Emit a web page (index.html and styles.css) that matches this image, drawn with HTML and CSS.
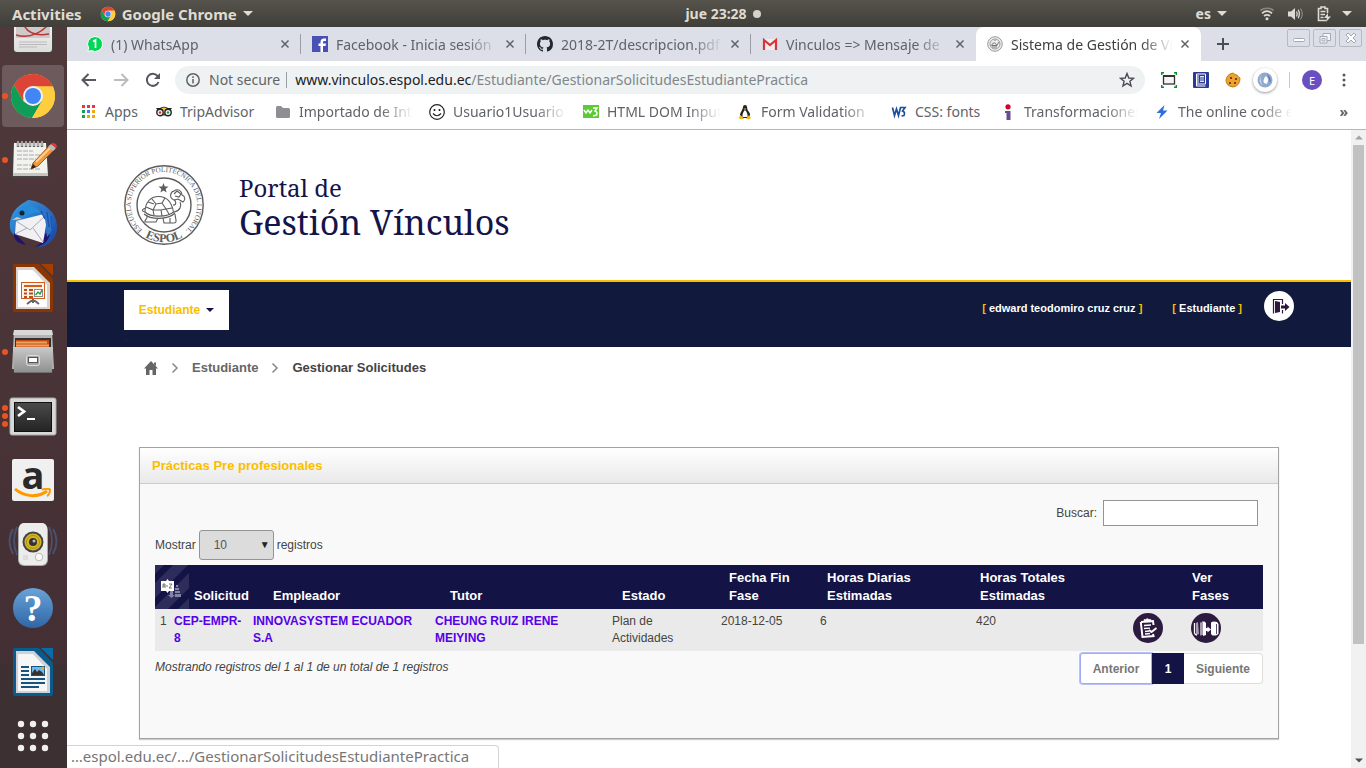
FILE: index.html
```html
<!DOCTYPE html>
<html lang="es">
<head>
<meta charset="utf-8">
<title>Sistema de Gestión de Vínculos</title>
<link rel="stylesheet" href="styles.css">
</head>
<body>
<svg width="0" height="0" class="defs" aria-hidden="true">
  <defs>
    <symbol id="chrome" viewBox="0 0 48 48">
      <circle cx="24" cy="24" r="22" fill="#ffcd40"/>
      <path d="M24 2A22 22 0 0 1 43.800 14.400H24L14 28 4.950 13A22 22 0 0 1 24 2Z" fill="#db4437"/>
      <path d="M4.950 13 15 30 24 33.500 33 29 23 46A22 22 0 0 1 4.950 13Z" fill="#0f9d58"/>
      <path d="M24 14.400H43.800A22 22 0 0 1 23 46L33 29Z" fill="#ffcd40"/>
      <circle cx="24" cy="24" r="10" fill="#f1f1f1"/>
      <circle cx="24" cy="24" r="8" fill="#4285f4"/>
    </symbol>
    <symbol id="close" viewBox="0 0 10 10"><path d="M1.500 1.500 8.500 8.500M8.500 1.500 1.500 8.500" stroke="#5f6368" stroke-width="1.500" fill="none"/></symbol>
    <symbol id="chev" viewBox="0 0 8 12"><path d="M1.500 1.500 6 6 1.500 10.500" stroke="#888" stroke-width="1.500" fill="none"/></symbol>
    <symbol id="caret" viewBox="0 0 10 5"><path d="M0 0H10L5 5Z" fill="currentColor"/></symbol>
    <linearGradient id="metal" x2="0" y2="1"><stop stop-color="#c9c9c9"/><stop offset="1" stop-color="#8e8e8e"/></linearGradient>
    <linearGradient id="paper" x2="0" y2="1"><stop stop-color="#fff"/><stop offset="1" stop-color="#dcdcdc"/></linearGradient>
    <linearGradient id="help" x2="0" y2="1"><stop stop-color="#6aa3d8"/><stop offset="1" stop-color="#2f66a6"/></linearGradient>
    <linearGradient id="screen" x2="0" y2="1"><stop stop-color="#4a4a4a"/><stop offset="1" stop-color="#242424"/></linearGradient>
    <linearGradient id="bird" x2="1" y2="1"><stop stop-color="#3aa0e6"/><stop offset="1" stop-color="#1a3fa0"/></linearGradient>
  </defs>
</svg>

<header class="topbar">
  <div class="top-left">
    <button class="top-item">Activities</button>
    <button class="top-item"><svg width="16" height="16"><use href="#chrome"/></svg>Google Chrome<svg width="10" height="5"><use href="#caret"/></svg></button>
  </div>
  <button class="top-item clock">jue 23:28<span class="dot"></span></button>
  <div class="top-right">
    <button class="top-item">es<svg width="10" height="5"><use href="#caret"/></svg></button>
    <svg width="16" height="14" viewBox="0 0 16 14" fill="none" stroke="#dfdbd2" stroke-width="1.700"><path d="M1.500 3.500C5 .5 11 .5 14.500 3.500" opacity=".4"/><path d="M3 6.300C6 3.800 10 3.800 13 6.300M5 9C7 7.600 9 7.600 11 9"/><circle cx="8" cy="11.800" r="1.500" fill="#dfdbd2" stroke="none"/></svg>
    <svg width="16" height="14" viewBox="0 0 16 14"><path d="M0 4.500H3L7 1V13L3 9.500H0Z" fill="#dfdbd2"/><path d="M8.500 4.500Q10 7 8.500 9.500M10.200 2.800Q12.500 7 10.200 11.200" stroke="#dfdbd2" stroke-width="1.300" fill="none"/><path d="M12.500 1.500Q16 7 12.500 12.500" stroke="#9b978e" fill="none"/></svg>
    <svg width="14" height="16" viewBox="0 0 14 16"><path d="M9 14.500H1.500V2.500H4V1H8V2.500H10.500V7" fill="none" stroke="#dfdbd2" stroke-width="1.600"/><path d="M3.500 5.500H8.500M3.500 8.500H8M3.500 11.500H6.500" stroke="#dfdbd2" stroke-width="1.500"/><path d="M11 7 7 12H9.800L9 16 14 10.500H11Z" fill="#dfdbd2"/></svg>
    <svg class="dim" width="10" height="5"><use href="#caret"/></svg>
  </div>
</header>

<div class="desktop">
<nav class="launcher" aria-label="Launcher">
  <button class="tile" aria-label="Document viewer"><svg width="48" height="48" viewBox="0 0 48 48"><rect x="4" y="2" width="40" height="43" rx="4" fill="#444"/><rect x="5" y="1" width="38" height="43" rx="3" fill="url(#paper)"/><rect x="7" y="15" width="34" height="15" fill="#cfcaca"/><path d="M7 27C18 30 30 27 40 16M14 15C18 26 28 28 40 26" stroke="#b8363a" stroke-width="1.500" fill="none"/><path d="M10 34H38M10 36.500H38M10 39H28" stroke="#bbb"/></svg></button>
  <button class="tile active" aria-label="Google Chrome"><span class="pips"><i></i></span><svg width="48" height="48"><use href="#chrome"/></svg></button>
  <button class="tile" aria-label="Text editor"><span class="pips"><i></i></span><svg width="48" height="48" viewBox="0 0 48 48"><path d="M4 8H38L40 42H3Z" fill="#444"/><path d="M5 7H37L39 40H4Z" fill="#f2f2ee"/><path d="M4 37H39V40H4Z" fill="#c6c6c0"/><path d="M9 6v5M13 6v5M17 6v5M21 6v5M25 6v5M29 6v5M33 6v5" stroke="#666" stroke-width="2.400"/><path d="M9 5v5M13 5v5M17 5v5M21 5v5M25 5v5M29 5v5M33 5v5" stroke="#eee"/><path d="M8 15H24M8 19H33M8 23H27M8 29H22M8 33H32" stroke="#aaa" stroke-dasharray="5 1"/><path d="M24 27 41 9 46 13 29 30 22 33Z" fill="#f0963c" stroke="#a85b18"/><path d="M27 26 42 11" stroke="#ffd08c" stroke-width="2"/><path d="M39 11 42 8 47 12 44 15Z" fill="#bbb"/><path d="M42 8C44 5 50 9 47 12Z" fill="#e03a3a"/><path d="M22 33 24 28 27 31Z" fill="#222"/></svg></button>
  <button class="tile" aria-label="Thunderbird"><svg width="50" height="50" viewBox="0 0 50 50"><path d="M3 19C6 8 16 4 20 1C34 2 49 12 49 28C49 40 40 48 30 48C38 44 36 36 34 33L7 37C1 33 1 25 3 19Z" fill="url(#bird)"/><path d="M6 34C5 42 12 45 18 46L8 35ZM37 35C36 42 32 46 26 48C38 47 42 39 42 33Z" fill="#23136b"/><path d="M8 22 36 15 39 20 35 44 7 35Z" fill="#f1f1f4"/><path d="M8 22 22 31 37 17M7 35 19 29M35 43 25 29" stroke="#aab" fill="none"/><path d="M5 21C10 4 24 3 33 14 26 12 20 17 14 18Z" fill="#268bd8"/><path d="M22 3C38 9 38 23 39 38C47 31 47 18 38 11Z" fill="#2c73c9"/><path d="M33 12 37 20M39 13 41 28M43 17 44 30" stroke="#1b56ad" stroke-width="1.500"/><circle cx="14" cy="14" r="2.500" fill="#123"/><path d="M4 21 9 18 14 20Z" fill="#ccc"/></svg></button>
  <button class="tile" aria-label="LibreOffice Impress"><svg width="48" height="48" viewBox="0 0 48 48"><path d="M6 0H30L44 15V46Q44 48 42 48H6Q4 48 4 46V2Q4 0 6 0Z" fill="#8b3503"/><path d="M7 3H25L41 19V45H7Z" fill="#d7d2cf"/><path d="M9 6H24L38 21V43H9Z" fill="#fff"/><path d="M32 0H44V12Z" fill="#a33e03"/><rect x="12.500" y="18.500" width="23" height="16" fill="#fdf1e8" stroke="#d15e1e"/><path d="M15 22H33" stroke="#d15e1e" stroke-width="2"/><path d="M15 26H18M15 29.500H18M15 33H18M20 26H24M20 29.500H24M20 33H24" stroke="#b74f1b" stroke-width="2"/><rect x="25.500" y="25.500" width="8" height="7" fill="#fff" stroke="#888"/><path d="M26.500 31 29 28 31 30 33 26" stroke="#2f9e44" stroke-width="1.500" fill="none"/><path d="M18 40 22 37H26L30 40M24 35V39" stroke="#666" stroke-width="2" fill="none"/></svg></button>
  <button class="tile" aria-label="Files"><span class="pips"><i></i></span><svg width="48" height="48" viewBox="0 0 48 48"><path d="M5 2H43L45 41H3Z" fill="#b4b4b4"/><path d="M5 2H43L44 7H4Z" fill="#d8d8d8"/><rect x="6" y="10" width="36" height="12" fill="#333"/><rect x="7" y="12" width="33" height="8" fill="#c24a1e"/><path d="M7 14.500H38M7 17.500H40" stroke="#f0a255" stroke-width="1.800"/><path d="M4 19H44L43 45H5Z" fill="url(#metal)"/><path d="M5 44.500H43" stroke="#6f6f6f"/><rect x="17.500" y="27.500" width="13" height="10" rx="2" fill="#a5a5a5" stroke="#dedede"/><rect x="19.500" y="29.500" width="9" height="5" fill="#fff" stroke="#555"/></svg></button>
  <button class="tile" aria-label="Terminal"><span class="pips"><i></i><i></i><i></i></span><svg width="48" height="40" viewBox="0 0 48 40"><rect x="1" y="2" width="46" height="37" rx="2" fill="#d8d8d8" stroke="#aaa"/><rect x="5" y="6" width="38" height="30" fill="#111"/><rect x="6" y="7" width="36" height="28" fill="url(#screen)"/><path d="M9 11 15 15.500 9 20" stroke="#fff" stroke-width="2.800" fill="none"/><path d="M18 23H26" stroke="#fff" stroke-width="2"/></svg></button>
  <button class="tile amazon" aria-label="Amazon"><span class="amz">a</span><svg width="38" height="12" viewBox="0 0 38 12"><path d="M1 1C10 9 24 10 33 3" stroke="#ff9900" stroke-width="3" fill="none"/><path d="M28 2C31 0 35 1 36 1.500 36 4 35 7 33 8" stroke="#ff9900" stroke-width="2" fill="none"/></svg></button>
  <button class="tile" aria-label="Rhythmbox"><svg width="50" height="48" viewBox="0 0 50 48"><g fill="none" stroke="#52658e" stroke-width="1.800" opacity=".6"><path d="M9 7Q3 20 9 35M5 9Q-2 21 5 34M41 7Q47 20 41 35M45 9Q52 21 45 34"/></g><rect x="10" y="4" width="30" height="42" rx="6" fill="#aaa"/><rect x="11" y="3" width="28" height="42" rx="5" fill="#ececea"/><circle cx="25" cy="22" r="10.500" fill="#424448"/><circle cx="25" cy="22" r="8.500" fill="#d6b51e"/><circle cx="25" cy="22" r="6.500" fill="none" stroke="#a8901c"/><circle cx="25" cy="22" r="4" fill="#333"/><circle cx="26" cy="21" r="1.500" fill="#bbb"/><circle cx="31" cy="37" r="3.800" fill="#f8f8f8" stroke="#bbb"/><path d="M15 35H20V40H15Z" fill="#ddd"/></svg></button>
  <button class="tile" aria-label="Help"><svg width="44" height="44" viewBox="0 0 44 44"><circle cx="22" cy="22" r="20" fill="url(#help)"/><text x="22" y="35" text-anchor="middle" class="qmark">?</text></svg></button>
  <button class="tile" aria-label="LibreOffice Writer"><svg width="48" height="48" viewBox="0 0 48 48"><path d="M6 0H30L44 15V46Q44 48 42 48H6Q4 48 4 46V2Q4 0 6 0Z" fill="#0b5a8c"/><path d="M7 3H25L41 19V45H7Z" fill="#ccd3d8"/><path d="M9 6H24L38 21V43H9Z" fill="#f6f6f6"/><path d="M32 0H44V12Z" fill="#0a6ba6"/><path d="M12 19H20M12 23H20M12 27H20M12 31H36M12 35H36M12 39H30" stroke="#17557f" stroke-width="2"/><rect x="22.500" y="18.500" width="13" height="9" fill="#72b9e8" stroke="#17557f"/><path d="M23 27V25L26 21 28 24 30 22 33 24 35 27Z" fill="#333"/><circle cx="34" cy="20" r="1.500" fill="#e9a93c"/></svg></button>
  <button class="tile" aria-label="Show applications"><svg width="32" height="32" viewBox="0 0 32 32" fill="#f2f0ee"><circle cx="4" cy="4" r="3.200"/><circle cx="16" cy="4" r="3.200"/><circle cx="28" cy="4" r="3.200"/><circle cx="4" cy="16" r="3.200"/><circle cx="16" cy="16" r="3.200"/><circle cx="28" cy="16" r="3.200"/><circle cx="4" cy="28" r="3.200"/><circle cx="16" cy="28" r="3.200"/><circle cx="28" cy="28" r="3.200"/></svg></button>
</nav>

<div class="browser">
  <div class="tabstrip">
    <div class="tab"><svg width="16" height="16" viewBox="0 0 16 16"><path d="M8 .5A7.500 7.500 0 1 1 4.500 14.600L.8 15.400 1.700 12A7.500 7.500 0 0 1 8 .5Z" fill="#00d757" stroke="#fff"/><path d="M6 5.500 8.500 4V12" stroke="#fff" stroke-width="1.700" fill="none"/></svg><span class="fade">(1) WhatsApp</span><button class="x" aria-label="Close tab"><svg width="10" height="10"><use href="#close"/></svg></button></div>
    <div class="tab"><svg width="16" height="16" viewBox="0 0 16 16"><path d="M0 0H16V16H0Z" fill="#4951b5"/><path d="M11 16V10H13.500L14 7.500H11V6Q11 5 12.500 5H14V2.500H12Q8.500 2.500 8.500 6V7.500H6.500V10H8.500V16Z" fill="#fff"/></svg><span class="fade">Facebook - Inicia sesión</span><button class="x" aria-label="Close tab"><svg width="10" height="10"><use href="#close"/></svg></button></div>
    <div class="tab"><svg width="16" height="16" viewBox="0 0 16 16"><path fill="#24292e" d="M8 0C3.580 0 0 3.580 0 8c0 3.540 2.290 6.530 5.470 7.590.4.070.55-.17.55-.38 0-.19-.01-.82-.01-1.490-2.010.37-2.530-.49-2.690-.94-.09-.23-.48-.94-.82-1.130-.28-.15-.68-.52-.01-.53.63-.01 1.080.58 1.230.82.72 1.210 1.870.87 2.330.66.070-.52.280-.87.510-1.070-1.780-.2-3.640-.89-3.640-3.950 0-.87.310-1.590.820-2.150-.08-.2-.36-1.020.080-2.120 0 0 .67-.21 2.200.82.640-.18 1.320-.27 2-.27s1.360.09 2 .27c1.530-1.040 2.200-.82 2.200-.82.440 1.100.16 1.920.080 2.120.510.56.820 1.270.820 2.150 0 3.070-1.870 3.750-3.650 3.950.29.25.54.73.54 1.480 0 1.070-.01 1.930-.01 2.200 0 .21.150.46.550.38A8.010 8.010 0 0 0 16 8c0-4.420-3.580-8-8-8Z"/></svg><span class="fade">2018-2T/descripcion.pdf</span><button class="x" aria-label="Close tab"><svg width="10" height="10"><use href="#close"/></svg></button></div>
    <div class="tab"><svg width="16" height="16" viewBox="0 0 16 16"><path d="M1 3H15V14H1Z" fill="#eee"/><path d="M2 14V4L8 9 14 4V14" fill="none" stroke="#d9343a" stroke-width="2.200"/></svg><span class="fade">Vinculos =&gt; Mensaje de</span><button class="x" aria-label="Close tab"><svg width="10" height="10"><use href="#close"/></svg></button></div>
    <div class="tab current"><svg width="16" height="16" viewBox="0 0 16 16" fill="none" stroke="#999"><circle cx="8" cy="8" r="7.300" fill="#eee"/><circle cx="8" cy="8" r="5"/><path d="M4.500 9.500Q7 4 10 9.500ZM10 9 12 6M5 11H10M8 4V5" stroke="#777"/></svg><span class="fade">Sistema de Gestión de Vínculos</span><button class="x" aria-label="Close tab"><svg width="10" height="10"><use href="#close"/></svg></button></div>
    <button class="newtab" aria-label="New tab"><svg width="12" height="12" viewBox="0 0 12 12"><path d="M6 0V12M0 6H12" stroke="#4a4d52" stroke-width="2"/></svg></button>
    <div class="winbtns">
      <button aria-label="Minimize"><svg width="12" height="12" viewBox="0 0 12 12"><rect x=".5" y="6.500" width="11" height="3" rx="1" fill="#fff" stroke="#a4a8b0"/></svg></button>
      <button aria-label="Restore"><svg width="12" height="12" viewBox="0 0 12 12" fill="#f5f6f9" stroke="#a4a8b0"><path d="M4 1.500H11.500V8.500H4Z"/><path d="M1 4.500H8V11H1Z"/><path d="M3 6.500H6V9H3Z"/></svg></button>
      <button aria-label="Close"><svg width="12" height="12" viewBox="0 0 12 12"><path d="M1 3 3 1 6 4 9 1 11 3 8 6 11 9 9 11 6 8 3 11 1 9 4 6Z" fill="#fff" stroke="#a4a8b0"/></svg></button>
    </div>
  </div>

  <div class="toolbar">
    <button class="tool" aria-label="Back"><svg width="16" height="14" viewBox="0 0 16 14"><path d="M7.500 1 1.500 7 7.500 13M2 7H15" stroke="#55585d" stroke-width="2" fill="none"/></svg></button>
    <button class="tool" aria-label="Forward"><svg width="16" height="14" viewBox="0 0 16 14"><path d="M8.500 1 14.500 7 8.500 13M14 7H1" stroke="#babcbe" stroke-width="2" fill="none"/></svg></button>
    <button class="tool" aria-label="Reload"><svg width="16" height="16" viewBox="0 0 16 16"><path d="M13.500 10A6 6 0 1 1 12.500 4L14 6" stroke="#55585d" stroke-width="2" fill="none"/><path d="M15 1V7H9Z" fill="#55585d"/></svg></button>
    <div class="omnibox">
      <svg width="16" height="16" viewBox="0 0 16 16" fill="none" stroke="#5f6368" stroke-width="1.500"><circle cx="8" cy="8" r="6.200"/><path d="M8 7V11.500M8 4.300V6"/></svg>
      <span class="notsecure">Not secure</span>
      <span class="url"><b>www.vinculos.espol.edu.ec</b>/Estudiante/GestionarSolicitudesEstudiantePractica</span>
      <svg width="16" height="16" viewBox="0 0 16 16"><path d="m8 1.500 1.800 4.500 4.700.3-3.600 3 1.200 4.700L8 11.400 3.900 14l1.200-4.700-3.600-3 4.700-.3Z" fill="none" stroke="#4a4d52" stroke-width="1.400"/></svg>
    </div>
    <div class="exts">
      <svg width="16" height="16" viewBox="0 0 16 16" fill="none"><rect x="2.500" y="4" width="11" height="8" fill="#f4f4f4" stroke="#333" stroke-width="1.300"/><path d="M2 4H14" stroke="#333" stroke-width="2"/><path d="M.7 3V.7H3M13 .7H15.300V3M15.300 13V15.300H13M3 15.300H.7V13" stroke="#0a8f2c" stroke-width="1.400"/></svg>
      <svg width="16" height="16" viewBox="0 0 16 16"><rect width="16" height="16" rx="1" fill="#2b3a92"/><path d="M3.500 2H12.500V12H3.500ZM3.500 12V14H12.500" stroke="#fff" fill="none"/><path d="M5 3V11" stroke="#fff"/><path d="M7 4H11V10H7Z" fill="#dfe3f5"/><path d="M8 5V9M10 5V9" stroke="#2b3a92"/></svg>
      <svg width="16" height="16" viewBox="0 0 16 16"><path d="M8 1Q10 3 12 3 13 5 15 6 15 14 8 15 1 14 1 8 2 2 8 1Z" fill="#eba32d" stroke="#c47a1e"/><path d="M5 5h2v2h-2zM10 6h2v2h-2zM4 10h2v2h-2zM9 10h2v2h-2z" fill="#7c4012"/></svg>
      <span class="round"><svg width="16" height="16" viewBox="0 0 16 16"><circle cx="8" cy="8" r="7.500" fill="#8fa9cf"/><path d="M5 2Q0 9 6 14 2 7 5 2Z" fill="#d2def0"/><path d="M9 4Q13 7 9.500 12 5 11 7 7 7.500 5 9 4Z" fill="#fff"/><path d="M10 2Q15 6 13 11 12 6 10 2Z" fill="#5878ad"/></svg></span>
      <span class="vline"></span>
      <button class="avatar">E</button>
      <svg class="kebab" width="4" height="14" viewBox="0 0 4 14" fill="#55585d"><circle cx="2" cy="2" r="1.500"/><circle cx="2" cy="7" r="1.500"/><circle cx="2" cy="12" r="1.500"/></svg>
    </div>
  </div>

  <nav class="bookmarks" aria-label="Bookmarks">
    <a href="#" class="b-apps"><svg width="16" height="16" viewBox="0 0 16 16"><path d="M1 1h3v3H1zM6 1h3v3H6zM11 1h3v3h-3z" fill="#e8344a"/><path d="M1 6h3v3H1zM1 11h3v3H1z" fill="#1c9e4b"/><path d="M6 6h3v3H6z" fill="#3c7df0"/><path d="M11 6h3v3h-3zM6 11h3v3H6zM11 11h3v3h-3z" fill="#f2a60c"/></svg><span>Apps</span></a>
    <a href="#" class="b-trip"><svg width="16" height="16" viewBox="0 0 16 16"><path d="M0 4H4Q8 1.500 12 4H16L14.500 6H1.500Z" fill="#222"/><path d="M5 4Q8 3 11 4L8 7Z" fill="#f5c33b"/><circle cx="4" cy="8.500" r="3.200" fill="#fff" stroke="#222" stroke-width="1.400"/><circle cx="12" cy="8.500" r="3.200" fill="#fff" stroke="#222" stroke-width="1.400"/><circle cx="4" cy="8.500" r="1.300" fill="#d03030"/><circle cx="12" cy="8.500" r="1.300" fill="#2a9a3c"/><path d="M7 10H9L8 12.500Z" fill="#222"/></svg><span>TripAdvisor</span></a>
    <a href="#"><svg width="16" height="16" viewBox="0 0 16 16"><path d="M1 3.500Q1 2 2.500 2H6L8 4H13.500Q15 4 15 5.500V12.500Q15 14 13.500 14H2.500Q1 14 1 12.500Z" fill="#8e8e93"/></svg><span class="fade">Importado de Internet</span></a>
    <a href="#"><svg width="16" height="16" viewBox="0 0 16 16" fill="none" stroke="#222" stroke-width="1.200"><circle cx="8" cy="8" r="7.300"/><path d="M4 9.500Q8 14 12 9.500"/><path d="M5.500 5V7M10.500 5V7" stroke-width="1.600"/></svg><span class="fade">Usuario1Usuario1</span></a>
    <a href="#"><svg width="16" height="16" viewBox="0 0 16 16"><path d="M0 1H16V14H0Z" fill="#5ccb33"/><path d="M1 6 3 9 5 6 7 9 9 6M10 4H14L12 7Q15 8 13.500 11L10 12" stroke="#fff" stroke-width="1.500" fill="none"/></svg><span class="fade">HTML DOM Input</span></a>
    <a href="#"><svg width="16" height="16" viewBox="0 0 16 16"><path d="M6 3Q6 1 8 1T10 3Q10 6 12 8T12 14H4Q2 11 4 8T6 3Z" fill="#222"/><path d="M8 6Q11 9 10.500 13H5.500Q5 9 8 6Z" fill="#fff"/><path d="M1.500 14 3.500 11 7 14.500 4 15.500ZM14 14 12 11 9 14.500 12 15.500ZM6.500 4.500H9.500L8 6Z" fill="#f2b713"/></svg><span class="fade">Form Validation</span></a>
    <a href="#" class="b-css"><svg width="16" height="16" viewBox="0 0 16 16" fill="none" stroke="#1e4f9e" stroke-width="1.700"><path d="M1.500 3.500 3.500 11.500 5.500 5 7.500 11.500 9.500 3.500H14L11.500 7Q14.500 8 13 11.500L10.500 12"/></svg><span>CSS: fonts</span></a>
    <a href="#"><svg width="16" height="16" viewBox="0 0 16 16"><circle cx="8" cy="2.800" r="2.600" fill="#d5002b"/><path d="M5 7H10.500V16H6.500V9H5Z" fill="#6b4a94"/></svg><span class="fade">Transformaciones</span></a>
    <a href="#"><svg width="16" height="16" viewBox="0 0 16 16"><path d="M10.500 1 2.500 9H7L5 15 13.500 6.500H9Z" fill="#2a6fdc"/></svg><span class="fade">The online code editor</span></a>
    <button class="more" aria-label="More bookmarks">»</button>
  </nav>

  <div class="viewport">
    <main class="page">
      <header class="brand">
        <svg width="80" height="80" viewBox="0 0 80 80" role="img" aria-label="ESPOL">
          <defs>
            <path id="ringpath" d="M18 65A33.200 33.200 0 1 1 62 65"/>
            <path id="namepath" d="M12 64.500A37.200 37.200 0 0 0 68 64.500"/>
          </defs>
          <circle cx="40" cy="40" r="39.200" fill="none" stroke="#5c5c5c" stroke-width="1.400"/>
          <circle cx="40" cy="40" r="27" fill="none" stroke="#5c5c5c" stroke-width="1.400"/>
          <path d="m39.500 18 1.300 3.400 3.700.2-2.900 2.300 1 3.500-3.100-2-3.100 2 1-3.500-2.900-2.300 3.700-.2Z" fill="#5c5c5c"/>
          <g fill="none" stroke="#5c5c5c" stroke-width="1.100">
            <path d="M21 47C21 37 27 31.500 34.500 31.500S47.500 36 49.500 47C44 52 27 53 21 47Z"/>
            <path d="M21 47C17 46 18 44 22 43M28 34l4 5 6-1 3-5M32 39l-3 6M38 38l4 6M22 42l7 3 1 5M29 45h8l5-1M37 45l1 6M42 44l6-1M24 37l6 2M42 44l3 5"/>
            <path d="M20 49C27 55 44 55 51 48M50 47C56 46 58 41 56 37M49 40C53 40 52 36 50 35C45 33 46 27 50 26C54 23 58 26 58 30C61 31 62 35 59 37L54 34 50 35"/>
            <path d="M23 51C24 55 20 54 21 57H32L34 53M39 53 40 58H50C54 58 51 53 51 49M50 29l3-3 4 3-2 3-4-1M46 53v5"/>
          </g>
          <text class="seal-text" text-anchor="middle"><textPath href="#ringpath" startOffset="50%">ESCUELA SUPERIOR POLITÉCNICA DEL LITORAL</textPath></text>
          <text class="seal-name" text-anchor="middle"><textPath href="#namepath" startOffset="50%">ESPOL</textPath></text>
        </svg>
        <h1><span>Portal de</span>Gestión Vínculos</h1>
      </header>
      <div class="navbar">
        <div class="menu"><button class="menu-btn">Estudiante<svg width="8" height="4" viewBox="0 0 10 5"><use href="#caret"/></svg></button><span class="semi">;</span></div>
        <div class="session">
          <span><em>[</em> edward teodomiro cruz cruz <em>]</em></span>
          <span><em>[</em> Estudiante <em>]</em></span>
          <button class="logout" aria-label="Salir"><svg width="30" height="30" viewBox="0 0 30 30"><path d="M9.500 22.500V8.500H18.500V13M18.500 19V22.500" stroke="#2b1a3c" stroke-width="1.200" fill="none"/><path d="M11 10 16 11V21L11 22Z" fill="#2b1a3c"/><path d="M17 14.500H21V12L25.500 16 21 20V17.500H17Z" fill="#2b1a3c"/></svg></button>
        </div>
      </div>
      <nav class="crumbs" aria-label="Ruta">
        <a href="#" aria-label="Inicio"><svg width="14" height="14" viewBox="0 0 14 14"><path d="M7 0 14 7.500H12V14H8.500V9H5.500V14H2V7.500H0ZM10 1.500H12V5L10 3Z" fill="#666"/></svg></a>
        <svg width="8" height="12"><use href="#chev"/></svg>
        <a href="#">Estudiante</a>
        <svg width="8" height="12"><use href="#chev"/></svg>
        <span class="here">Gestionar Solicitudes</span>
      </nav>
      <section class="panel">
        <h2>Prácticas Pre profesionales</h2>
        <div class="panel-body">
          <div class="search"><label for="q">Buscar:</label><input id="q" type="text"></div>
          <div class="length"><label for="len">Mostrar</label><span class="selwrap"><select id="len"><option>10</option></select></span><span>registros</span></div>
          <table>
            <colgroup><col class="c1"><col class="c2"><col class="c3"><col class="c4"><col class="c5"><col class="c6"><col class="c7"><col class="c8"><col class="c9"><col class="c10"></colgroup>
            <thead><tr>
              <th class="sort"><svg width="34" height="44" viewBox="0 0 34 44"><path d="M0 0H9L0 9ZM18 0H33L0 33V18ZM34 8V23L13 44H0V42ZM34 33V44H23Z" fill="#fff" opacity=".11"/><path d="M6 16H11L12.500 14 14 16H19V26H14L12.500 28 11 26H6Z" fill="#fff"/><path d="M8 23V19H10V23M8 21H10M11 21H13M14 19H17L14 23H17" stroke="#555" fill="none" stroke-width=".8"/><path d="M15 26H18V30H20L16.500 33 13 30H15ZM21 20H23V22H21ZM20 23H24V25H20ZM20 26H25V28H20ZM20 29H26V32H20Z" fill="#8384a5"/></svg></th>
              <th class="p25">Solicitud</th><th class="p25">Empleador</th><th class="p20">Tutor</th><th class="p15">Estado</th><th class="p13">Fecha Fin<br>Fase</th><th class="p12">Horas Diarias<br>Estimadas</th><th class="p9">Horas Totales<br>Estimadas</th><th></th><th class="p6">Ver<br>Fases</th>
            </tr></thead>
            <tbody><tr>
              <td>1</td><td><a href="#">CEP-EMPR-8</a></td><td><a href="#">INNOVASYSTEM ECUADOR S.A</a></td><td><a href="#">CHEUNG RUIZ IRENE MEIYING</a></td><td>Plan de Actividades</td><td>2018-12-05</td><td>6</td><td>420</td>
              <td><button class="act" aria-label="Plan de actividades"><svg width="30" height="30" viewBox="0 0 30 30"><circle cx="15" cy="15" r="15" fill="#2d1a40"/><g fill="none" stroke="#fff"><path d="M8 9 20 8 20.500 12M20 21 20.500 23 9.500 24 7.800 9" stroke-width="2"/><path d="M11 6.500H13Q14 4.500 15.500 6.300L18 6.500V9H11Z" fill="#fff" stroke-width=".5"/><path d="M11 12.500 18 12M11 15.500 17 15.200M12 18.500 16 18M12 21 17 20.500" stroke-width="1.300"/><path d="M16 17 18.500 19 23.500 15" stroke-width="2"/></g></svg></button></td>
              <td><button class="act" aria-label="Ver fases"><svg width="30" height="30" viewBox="0 0 30 30"><circle cx="15" cy="15" r="15" fill="#2d1a40"/><path d="M5 10 7 9 8 21 5 22Z" fill="#a79bb2"/><path d="M3.500 10V20Q4 22 6 22" stroke="#fff" stroke-width="1.300" fill="none"/><path d="M9 9.500 12 9V22L9 22.500Z" fill="#a79bb2"/><path d="M11 8.500H13.500L15 10V22L12 23V10Z" fill="#fff"/><path d="M15 16.500H17" stroke="#fff" stroke-width="3"/><path d="M16.500 13.500 20 16.500 16.500 19.500Z" fill="#fff"/><path d="M20 9.500Q22 8 26 9L27.500 11V21L25 22.500H21.500L20 21Z" fill="#fff"/><path d="M25.500 11V21" stroke="#2d1a40" stroke-width=".8"/></svg></button></td>
            </tr></tbody>
          </table>
          <div class="foot">
            <p>Mostrando registros del 1 al 1 de un total de 1 registros</p>
            <div class="pager"><button class="prev">Anterior</button><button class="num">1</button><button class="next">Siguiente</button></div>
          </div>
        </div>
      </section>
    </main>
    <div class="scrollbar" aria-hidden="true">
      <svg width="8" height="5" viewBox="0 0 10 5"><path d="M0 5H10L5 0Z" fill="#a3a3a3"/></svg>
      <div class="track"><div class="thumb"></div></div>
      <svg width="8" height="5" viewBox="0 0 10 5"><path d="M0 0H10L5 5Z" fill="#505050"/></svg>
    </div>
    <div class="status">…espol.edu.ec/…/GestionarSolicitudesEstudiantePractica</div>
  </div>
</div>
</div>
</body>
</html>
```
FILE: styles.css
```css
* { box-sizing: border-box; }
body { margin: 0; height: 100vh; display: flex; flex-direction: column; overflow: hidden; font-family: "Noto Sans", "Open Sans", sans-serif; font-size: 14px; }
button { border: 0; padding: 0; background: none; font: inherit; color: inherit; }
a { text-decoration: none; color: inherit; }
svg { flex: none; display: block; }
.defs { position: absolute; }

.topbar { flex: none; height: 27px; display: grid; grid-template-columns: 1fr auto 1fr; align-items: center; background: linear-gradient(#55534b, #3f3e39); color: #dfdbd2; font-weight: bold; }
.top-left { display: flex; gap: 18px; padding-left: 12px; font-size: 15px; line-height: 20px; }
.top-item { display: flex; align-items: center; gap: 6px; }
.clock { margin-left: 80px; line-height: 20px; }
.dot { width: 8px; height: 8px; border-radius: 50%; background: #d5d2ca; }
.top-right { display: flex; justify-content: flex-end; align-items: center; gap: 13px; padding-right: 14px; }
.top-right .top-item { margin-right: 19px; }
.dim { margin-left: -2px; }

.desktop { flex: 1; min-height: 0; display: flex; }
.launcher { flex: none; width: 67px; overflow: hidden; padding-left: 2px; background: linear-gradient(#50393b, #432f34 85%, #3d3032 87%); display: flex; flex-direction: column; gap: 2px; }
.tile { flex: none; position: relative; width: 62px; height: 62px; border-radius: 4px; display: flex; align-items: center; justify-content: center; }
.tile:first-child { margin-top: -26px; }
.tile.active { background: #6d5a5c; }
.pips { position: absolute; left: 0; top: 0; bottom: 0; display: flex; flex-direction: column; justify-content: center; gap: 2px; }
.pips i { width: 6px; height: 6px; border-radius: 50%; background: #ea5421; }
.amazon { flex-direction: column; width: 42px; height: 42px; margin: 10px; border-radius: 2px; background: #f0f0f0; }
.amz { font-family: "Open Sans", sans-serif; font-weight: bold; font-size: 38px; line-height: 28px; color: #2a2a2a; }
.qmark { font-family: "Liberation Serif", serif; font-weight: bold; font-size: 38px; fill: #fff; }

.browser { flex: 1; min-width: 0; display: flex; flex-direction: column; background: #fff; }
.tabstrip { flex: none; height: 34px; display: flex; align-items: center; background: #dcdfe7; padding: 0 4px 0 9px; color: #5f6368; }
.tab { flex: 0 1 225px; min-width: 0; height: 34px; display: flex; align-items: center; padding: 0 11px; position: relative; }
.tab svg + .fade { margin-left: 8px; }
.fade { flex: 1; min-width: 0; overflow: hidden; white-space: nowrap; -webkit-mask-image: linear-gradient(to right, #000 calc(100% - 32px), transparent); mask-image: linear-gradient(to right, #000 calc(100% - 32px), transparent); }
.tab .x { margin-left: 7px; }
.tab:not(.current):not(:nth-child(4))::after { content: ""; position: absolute; right: 0; top: 7px; width: 1px; height: 20px; background: #9a9da3; }
.current { background: #fff; color: #3c4043; border-radius: 8px 8px 0 0; }
.newtab { margin-left: 16px; }
.winbtns { display: flex; gap: 3px; margin-left: auto; align-self: flex-start; padding-top: 2px; }
.winbtns button { width: 23px; height: 18px; border: 1px solid #b5b9c2; border-radius: 2px; display: flex; align-items: center; justify-content: center; }

.toolbar { flex: none; height: 38px; display: flex; align-items: center; padding: 0 20px 0 14px; gap: 16px; }
.omnibox { flex: 1; height: 28px; border-radius: 14px; background: #eef2f3; display: flex; align-items: center; padding: 0 10px; margin-left: -2px; color: #5f6368; }
.notsecure { padding: 0 6px 0 8px; border-right: 1px solid #9a9da3; line-height: 16px; }
.url { flex: 1; padding-left: 8px; color: #80868b; line-height: 16px; }
.url b { font-weight: normal; color: #202124; }
.exts { display: flex; align-items: center; gap: 16px; }
.round { width: 24px; height: 24px; border-radius: 50%; margin: 0 -4px; box-shadow: 0 1px 3px #999; display: flex; align-items: center; justify-content: center; }
.vline { width: 1px; height: 16px; background: #c8cacc; margin-right: -4px; }
.kebab { margin-left: 4px; }
.avatar { width: 20px; height: 20px; border-radius: 50%; background: #6a4fc0; color: #fff; font-size: 11px; }

.bookmarks { flex: none; height: 31px; border-bottom: 1px solid #b6b6b6; display: flex; align-items: center; gap: 16px; padding: 0 18px 5px 14px; color: #5f6368; }
.bookmarks a { flex: 0 1 138px; min-width: 0; display: flex; align-items: center; gap: 8px; white-space: nowrap; line-height: 20px; }
.bookmarks .b-apps { flex: none; width: 59px; }
.bookmarks .b-trip { flex: none; width: 103px; }
.bookmarks .b-css { flex: none; width: 93px; }
.more { margin-left: auto; font-weight: bold; line-height: 20px; }

.viewport { flex: 1; min-height: 0; position: relative; display: flex; }
.page { flex: 1; min-width: 0; overflow: hidden; font-family: "Liberation Sans", Arial, sans-serif; font-size: 12px; color: #444; }
.brand { height: 150px; padding: 0 57px; display: flex; align-items: center; gap: 35px; }
.brand h1 { margin: 0; padding-top: 5px; font-family: "Noto Serif", "Liberation Serif", serif; font-weight: normal; font-size: 34px; line-height: 40px; color: #14134a; }
.brand h1 span { display: block; font-size: 24px; line-height: 28px; }
.seal-text { font-family: "Liberation Serif", serif; font-size: 7px; fill: #5c5c5c; }
.seal-name { font-family: "Liberation Serif", serif; font-weight: bold; font-size: 12px; fill: #5c5c5c; }
.navbar { height: 67px; border-top: 2px solid #f9be00; background: #111a3c; padding: 8px 57px 0; display: flex; justify-content: space-between; align-items: flex-start; }
.menu { display: flex; flex-direction: column; }
.menu-btn { width: 105px; height: 40px; background: #fff; color: #f9be00; font-weight: bold; display: flex; align-items: center; justify-content: center; gap: 6px; }
.menu-btn svg { color: #14134a; }
.semi { color: #291f45; line-height: 15px; }
.session { display: flex; align-items: center; color: #fff; font-weight: bold; font-size: 11px; gap: 30px; margin-top: 1px; }
.session span { padding-top: 3px; }
.session em { font-style: normal; color: #f9be00; }
.logout { width: 30px; height: 30px; border-radius: 50%; background: #fff; margin-left: -8px; }
.crumbs { height: 41px; display: flex; align-items: center; gap: 13px; padding: 0 77px; font-weight: bold; font-size: 13px; color: #666; }
.here { color: #444; }
.panel { margin: 59px 72px 0; border: 1px solid #a3a3a3; background: #f9f9f9; box-shadow: 0 1px 1px #ccc; }
.panel h2 { margin: 0; height: 36px; padding: 0 12px; border-bottom: 1px solid #ccc; background: linear-gradient(#fff, #e9e9e9); color: #f9be00; font-size: 13px; line-height: 35px; }
.panel-body { padding: 16px 15px 54px; }
.search { display: flex; justify-content: flex-end; align-items: center; gap: 6px; padding-right: 5px; }
.search input { width: 155px; height: 26px; border: 1px solid #949494; background: #fff; }
.length { display: flex; align-items: center; gap: 3px; margin: 4px 0 5px; }
.selwrap { position: relative; display: flex; }
.selwrap::after { content: "▼"; position: absolute; right: 4px; top: 8px; font-size: 10px; line-height: 14px; color: #222; pointer-events: none; }
.length select { appearance: none; width: 75px; height: 30px; padding: 0 14px; border: 1px solid #949494; border-radius: 3px; background: #dcdcdc; font: inherit; color: #555; }
table { width: 100%; table-layout: fixed; border-collapse: collapse; }
.c1 { width: 14px; } .c2 { width: 79px; } .c3 { width: 182px; } .c4 { width: 177px; } .c5 { width: 109px; }
.c6 { width: 99px; } .c7 { width: 156px; } .c8 { width: 157px; } .c9 { width: 58px; } .c10 { width: 77px; }
thead { background: #141346; }
th { position: relative; padding: 4px 0; height: 44px; vertical-align: bottom; text-align: left; color: #fff; font-size: 13px; line-height: 18px; }
.sort svg { position: absolute; left: 0; top: 0; }
.p25 { padding-left: 25px; } .p20 { padding-left: 20px; } .p15 { padding-left: 15px; } .p13 { padding-left: 13px; } .p12 { padding-left: 12px; } .p9 { padding-left: 9px; } .p6 { padding-left: 6px; }
td { padding: 4px 5px; height: 42px; vertical-align: top; line-height: 17px; background: #eaeaea; }
td a { font-weight: bold; color: #5500e8; }
.act { display: block; width: 30px; height: 30px; }
.foot { display: flex; justify-content: space-between; align-items: flex-start; padding-top: 2px; }
.foot p { margin: 0; font-style: italic; line-height: 28px; }
.pager { display: flex; font-weight: bold; color: #777; }
.pager button { height: 31px; background: #fff; border: 1px solid #ddd; }
.pager .prev { width: 72px; border-radius: 3px 0 0 3px; border: 0; box-shadow: inset 0 0 0 1px #a0aaf5, 0 0 0 1px #b9c0f8; }
.pager .num { width: 32px; background: #141346; border: 0; color: #fff; }
.pager .next { width: 79px; border-radius: 0 4px 4px 0; border-left: 0; }

.scrollbar { flex: none; width: 15px; background: #f1f1f1; display: flex; flex-direction: column; align-items: center; padding: 5px 0; gap: 5px; }
.track { flex: 1; }
.thumb { width: 11px; height: 82%; background: #c1c1c1; }
.status { position: absolute; left: 0; bottom: 0; height: 23px; width: 432px; padding: 0 4px; border: 1px solid #d3d3d3; border-left: 0; border-bottom: 0; border-radius: 0 4px 0 0; background: #fff; color: #767676; font-size: 15px; line-height: 20px; white-space: nowrap; }
```
